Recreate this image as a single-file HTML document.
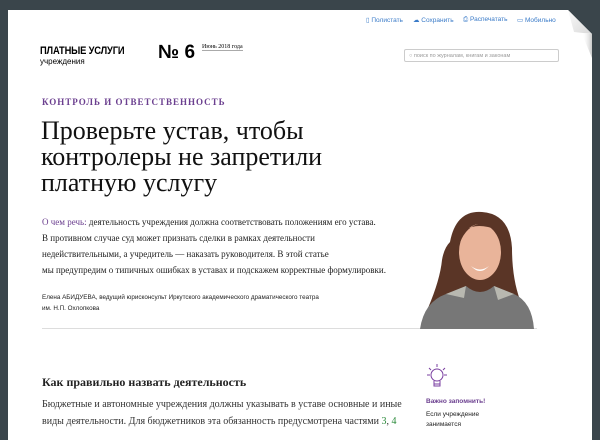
<!DOCTYPE html>
<html><head><meta charset="utf-8"><style>
body{margin:0;width:600px;height:427px;background:#3a454b;overflow:hidden;position:relative;font-family:"Liberation Serif",serif;}
.page{position:absolute;left:8px;top:10px;width:584px;height:430px;background:#fff;}
.a{position:absolute;white-space:nowrap;}
.tb{font-family:"Liberation Sans",sans-serif;font-size:6.5px;color:#3a7bc8;}
</style></head><body>
<div class="page"></div>
<svg class="a" style="left:560px;top:8px" width="40" height="60" viewBox="0 0 40 60">
<defs><linearGradient id="g" x1="0" y1="0" x2="1" y2="1"><stop offset="0" stop-color="#fafafa"/><stop offset="1" stop-color="#d8d8d8"/></linearGradient>
<linearGradient id="s" x1="0" y1="0" x2="1" y2="0"><stop offset="0" stop-color="#fff" stop-opacity="0"/><stop offset="1" stop-color="#c8c8c8"/></linearGradient></defs>
<polygon points="8,2 40,2 40,60 32,60 32,26" fill="#3a454b"/>
<polygon points="22,26 32,26 32,50" fill="url(#s)"/>
<polygon points="8,2 32,26 14,24" fill="url(#g)"/>
</svg>
<div class="a tb" style="left:366px;top:16px">▯ Полистать</div>
<div class="a tb" style="left:413px;top:16px">☁ Сохранить</div>
<div class="a tb" style="left:463px;top:16px">⎙ Распечатать</div>
<div class="a tb" style="left:517px;top:16px">▭ Мобильно</div>
<div class="a" style="left:40px;top:45px;font-family:'Liberation Sans',sans-serif;font-size:11px;font-weight:bold;transform:scaleX(.85);transform-origin:left;letter-spacing:-0.2px">ПЛАТНЫЕ УСЛУГИ</div>
<div class="a" style="left:40px;top:57px;font-family:'Liberation Sans',sans-serif;font-size:8px">учреждения</div>
<div class="a" style="left:158px;top:42px;font-family:'Liberation Sans',sans-serif;font-size:19px;font-weight:bold">№ 6</div>
<div class="a" style="left:202px;top:44px;font-size:6px;border-bottom:1px solid #aaa">Июнь 2018 года</div>
<div class="a" style="left:404px;top:49px;width:155px;height:13px;border:1px solid #ccc;border-radius:2px;font-family:'Liberation Sans',sans-serif;font-size:5.5px;color:#999;line-height:13px;padding-left:4px;box-sizing:border-box">○ поиск по журналам, книгам и законам</div>
<div class="a" style="left:42px;top:97px;font-size:9px;color:#6b3f8f;letter-spacing:1px;font-weight:bold">КОНТРОЛЬ И ОТВЕТСТВЕННОСТЬ</div>
<div class="a" style="left:41px;top:118px;font-size:26px;line-height:26px;color:#111">Проверьте устав, чтобы<br>контролеры не запретили<br>платную услугу</div>
<div class="a" style="left:42px;top:214px;font-size:9px;line-height:16px;color:#222"><span style="color:#6b3f8f">О чем речь:</span> деятельность учреждения должна соответствовать положениям его устава.<br>В противном случае суд может признать сделки в рамках деятельности<br>недействительными, а учредитель — наказать руководителя. В этой статье<br>мы предупредим о типичных ошибках в уставах и подскажем корректные формулировки.</div>
<div class="a" style="left:42px;top:292px;font-family:'Liberation Sans',sans-serif;font-size:6.3px;line-height:11px;color:#222">Елена АБИДУЕВА, ведущий юрисконсульт Иркутского академического драматического театра<br>им. Н.П. Охлопкова</div>
<div class="a" style="left:42px;top:328px;width:495px;height:1px;background:#ddd"></div>
<svg class="a" style="left:420px;top:208px" width="120" height="121" viewBox="0 0 120 121">
<path d="M30 34 Q36 2 62 4 Q90 6 92 40 Q92 70 100 92 L8 100 Q20 72 22 52 Q24 40 30 34Z" fill="#5a3526"/>
<ellipse cx="60" cy="44" rx="21" ry="28" fill="#e9b49a"/>
<path d="M38 34 Q46 10 78 22 Q66 14 58 16 Q44 20 38 40Z" fill="#5a3526"/>
<path d="M51 58 Q60 65 69 58 Q60 68 51 58Z" fill="#fff"/>
<path d="M0 121 Q4 94 26 86 L46 78 Q60 90 74 78 L94 86 Q112 94 114 121Z" fill="#777"/>
<path d="M26 86 L46 78 L44 90Z M74 78 L94 86 L78 92Z" fill="#b8b8b0"/>
</svg>
<div class="a" style="left:42px;top:375px;font-size:12px;font-weight:bold;color:#222">Как правильно назвать деятельность</div>
<div class="a" style="left:42px;top:396px;font-size:10px;line-height:17px;color:#333">Бюджетные и автономные учреждения должны указывать в уставе основные и иные<br>виды деятельности. Для бюджетников эта обязанность предусмотрена частями <span style="color:#2a8a3a">3</span>, <span style="color:#2a8a3a">4</span></div>
<svg class="a" style="left:426px;top:363px" width="22" height="28" viewBox="0 0 22 28" fill="none" stroke="#7a3fa0" stroke-width="1"><circle cx="11" cy="12" r="6"/><path d="M8 18v5h6v-5M8 21h6M11 1v3M3 5l2 2M19 5l-2 2M1 12h3M21 12h-3"/></svg>
<div class="a" style="left:426px;top:398px;font-family:'Liberation Sans',sans-serif;font-size:6.5px;font-weight:bold;color:#6b3f8f">Важно запомнить!</div>
<div class="a" style="left:426px;top:410px;font-family:'Liberation Sans',sans-serif;font-size:6.5px;line-height:10px;color:#222">Если учреждение<br>занимается</div>
</body></html>
